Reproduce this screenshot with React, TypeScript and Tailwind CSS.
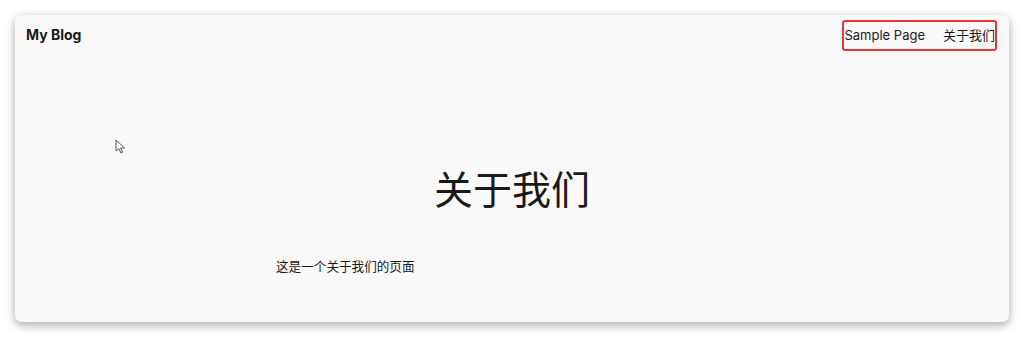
import React from 'react';

const font = { fontFamily: 'Inter, "Noto Sans CJK SC", sans-serif' };

const Cursor: React.FC = () => (
  <svg width="12" height="16" viewBox="0 0 12 16" className="absolute left-[115px] top-[139px]">
    <path d="M1 1 L1 12 L3.8 9.6 L6 14 L7.6 13.2 L5.5 9 L9.5 9 Z" fill="#fff" stroke="#555" strokeWidth="1" strokeLinejoin="round" />
  </svg>
);

export default function App() {
  return (
    <div className="relative w-[1024px] h-[337px] bg-white pt-[15px] pl-[15px]" style={font}>
      <div className="w-[994px] h-[307px] rounded-[7px] bg-[#f9f9f9] shadow-[0_3px_10px_rgba(0,0,0,0.35)] flex flex-col">

        {/* header */}
        <div className="flex items-start justify-between pl-[11px] pr-[12px]">
          <div className="mt-[9px] text-[14px] font-bold text-[#1a1a1a]">My Blog</div>
          <div className="mt-[5px] h-[31px] flex items-center gap-[18px] border-2 border-[#e8343a] rounded-[3px] text-[13px] text-[#1a1a1a]">
            <span>Sample Page</span>
            <span>关于我们</span>
          </div>
        </div>

        {/* content */}
        <div className="flex flex-col">
          <h1 className="mt-[115px] text-center text-[39px] leading-[48px] text-[#1a1a1a]">关于我们</h1>
          <p className="mt-[44px] pl-[261px] text-[12.6px] text-[#1a1a1a]">这是一个关于我们的页面</p>
        </div>
      </div>
      <Cursor />
    </div>
  );
}
